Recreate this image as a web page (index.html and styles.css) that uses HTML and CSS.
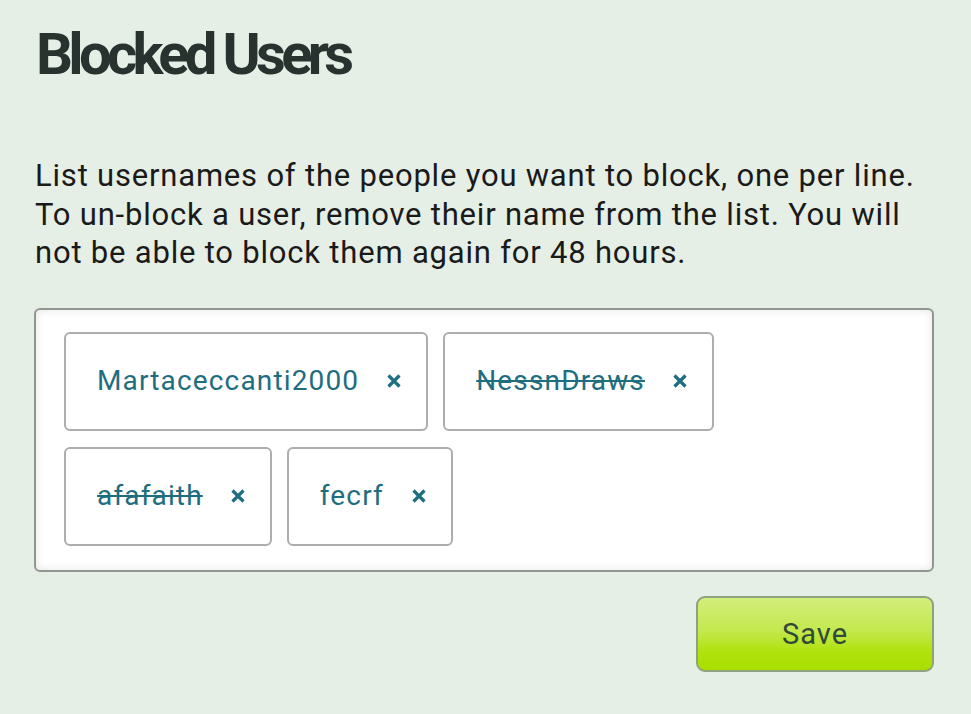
FILE: index.html
```html
<!DOCTYPE html>
<html lang="en">
<head>
<meta charset="utf-8">
<title>Blocked Users</title>
<link rel="stylesheet" href="styles.css">
</head>
<body>
<main class="page">
  <h1 class="title">Blocked Users</h1>
  <p class="desc">List usernames of the people you want to block, one per line.<br>To un-block a user, remove their name from the list. You will<br>not be able to block them again for 48 hours.</p>
  <div class="box">
    <div class="chip"><span class="name">Martaceccanti2000</span><span class="x"><svg viewBox="0 0 14 14" width="14" height="14"><path d="M1.5 1.5 L12.5 12.5 M12.5 1.5 L1.5 12.5" stroke="currentColor" stroke-width="3.2"/></svg></span></div>
    <div class="chip"><span class="name struck">NessnDraws</span><span class="x"><svg viewBox="0 0 14 14" width="14" height="14"><path d="M1.5 1.5 L12.5 12.5 M12.5 1.5 L1.5 12.5" stroke="currentColor" stroke-width="3.2"/></svg></span></div>
    <div class="chip"><span class="name struck">afafaith</span><span class="x"><svg viewBox="0 0 14 14" width="14" height="14"><path d="M1.5 1.5 L12.5 12.5 M12.5 1.5 L1.5 12.5" stroke="currentColor" stroke-width="3.2"/></svg></span></div>
    <div class="chip"><span class="name">fecrf</span><span class="x"><svg viewBox="0 0 14 14" width="14" height="14"><path d="M1.5 1.5 L12.5 12.5 M12.5 1.5 L1.5 12.5" stroke="currentColor" stroke-width="3.2"/></svg></span></div>
  </div>
  <div class="actions">
    <button class="save" type="button">Save</button>
  </div>
</main>
</body>
</html>
```
FILE: styles.css
```css
html, body {
  margin: 0;
  padding: 0;
  background: #e6efe5;
}
body {
  font-family: Roboto, "Liberation Sans", sans-serif;
  color: #1b1b1b;
}
.page {
  padding: 19px 37px 0 34px;
}
.title {
  margin: 0;
  padding-left: 2px;
  font-size: 58px;
  line-height: 70px;
  font-weight: 700;
  letter-spacing: -4.7px;
  color: #283330;
}
.desc {
  margin: 68px 0 0 1px;
  font-size: 31px;
  line-height: 38.5px;
  letter-spacing: 0.8px;
  color: #1a1a1a;
}
.box {
  margin-top: 35px;
  box-sizing: border-box;
  width: 900px;
  height: 264px;
  border: 2px solid #8f978f;
  border-radius: 6px;
  background: #fff;
  box-shadow: inset 0 0 10px rgba(0,0,0,0.10);
  padding: 22px 28px;
  display: flex;
  flex-wrap: wrap;
  align-content: flex-start;
  gap: 16px 15px;
}
.chip {
  box-sizing: border-box;
  height: 99px;
  border: 2px solid #adadad;
  border-radius: 6px;
  background: #fff;
  display: flex;
  align-items: center;
  padding: 0 25px 0 31px;
  gap: 28px;
  color: #1f6e80;
}
.name {
  font-size: 28px;
  line-height: 32px;
  letter-spacing: 1.15px;
}
.struck {
  text-decoration: line-through;
  text-decoration-thickness: 2px;
}
.x {
  display: flex;
  width: 14px;
  height: 14px;
  color: #1f6e80;
}
.actions {
  display: flex;
  justify-content: flex-end;
  margin-top: 24px;
}
.save {
  box-sizing: border-box;
  width: 238px;
  height: 76px;
  border: 2px solid #8fa27f;
  border-radius: 9px;
  background: linear-gradient(#d3ee7c 0%, #c4e84e 45%, #b0e20e 75%, #a8df00 100%);
  font-family: Roboto, "Liberation Sans", sans-serif;
  font-size: 29px;
  letter-spacing: 1px;
  color: #2f4a38;
  padding: 0;
}
```
